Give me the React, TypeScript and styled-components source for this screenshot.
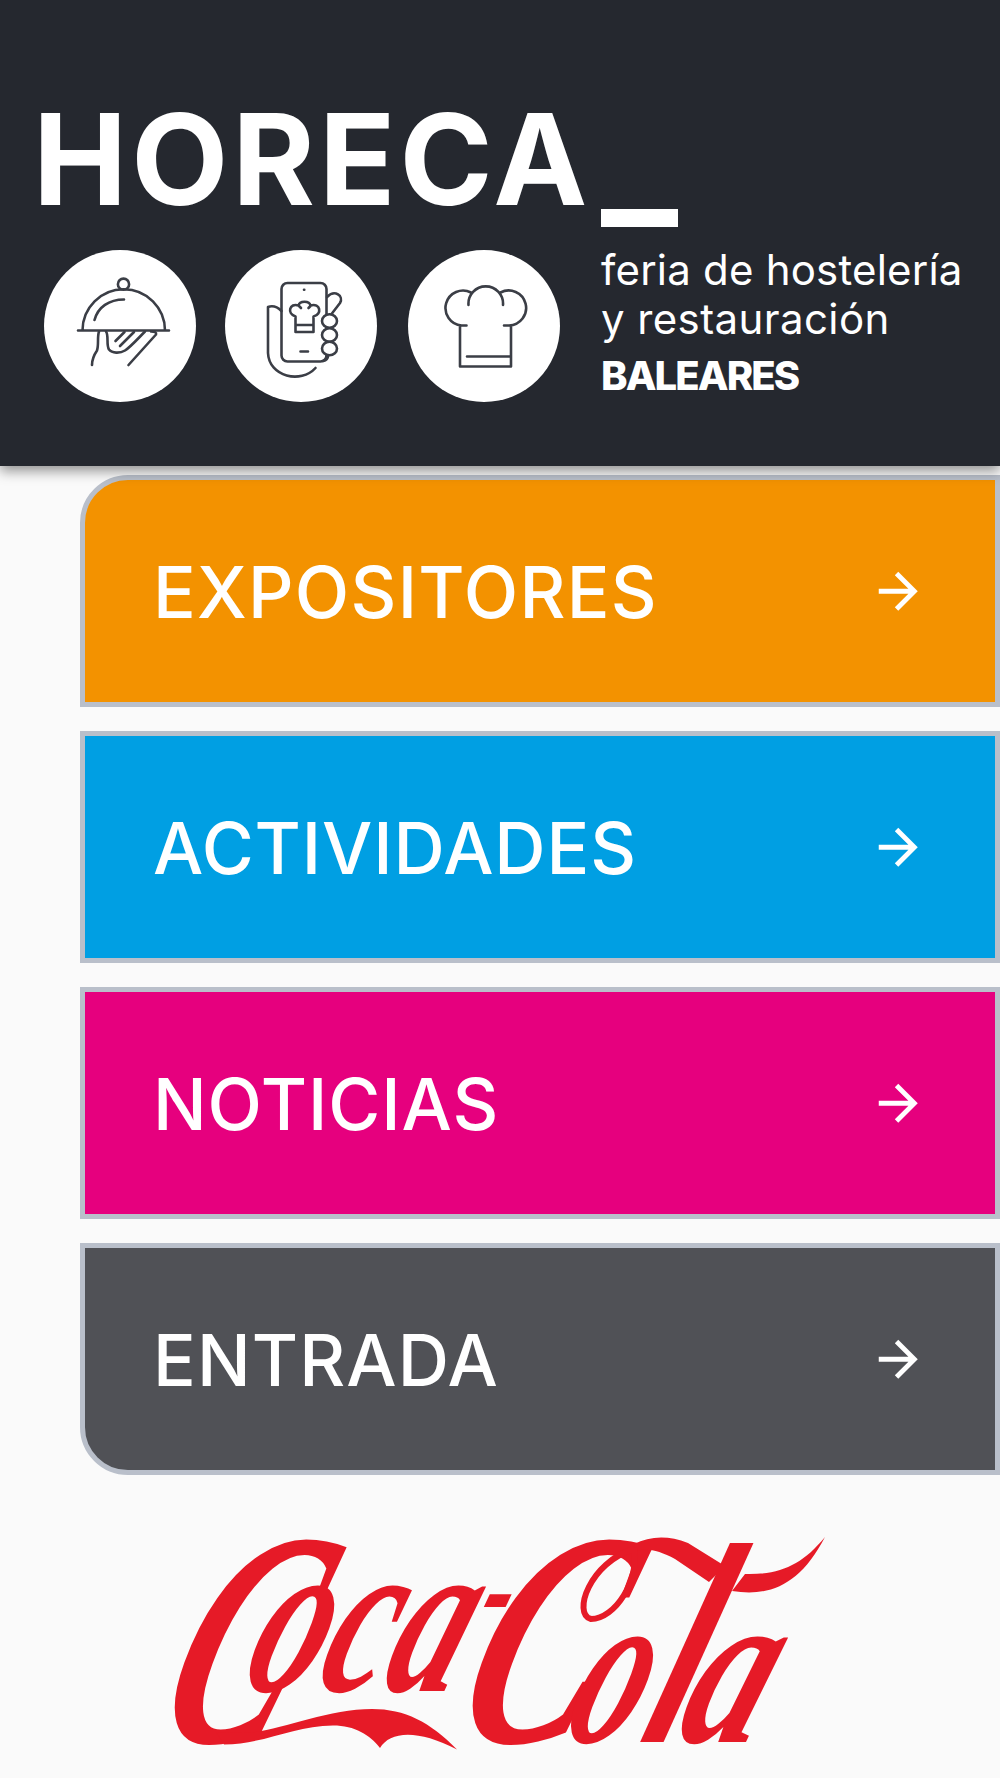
import React from "react";
import styled, { createGlobalStyle } from "styled-components";

const GlobalStyle = createGlobalStyle`
  *, *::before, *::after { box-sizing: border-box; }
  body { margin: 0; background: #fafafa; font-family: Inter, "Liberation Sans", sans-serif; }
`;

const Page = styled.div`
  height: 1778px;
  display: flex;
  flex-direction: column;
  background: #fafafa;
`;

const Header = styled.header`
  position: relative;
  z-index: 1;
  flex: none;
  height: 466px;
  padding: 113px 30px 0 35px;
  background: #25282f;
  color: #fff;
  box-shadow: 0 5px 12px rgba(0, 0, 0, 0.42);
`;

const Brand = styled.div`
  display: flex;
  height: 137px;
`;

const BrandName = styled.h1`
  margin: 0 0 0 -2px;
  width: 568px;
  height: 92px;
  font: 700 126px/92px Inter, sans-serif;
  letter-spacing: 4px;
  white-space: nowrap;
`;

const Underscore = styled.span`
  width: 77px;
  height: 18px;
  margin-top: 96px;
  background: #fff;
`;

const BrandDetails = styled.div`
  display: flex;
  padding-left: 9px;
`;

const Badges = styled.div`
  display: grid;
  grid-template-columns: 180.5px 183.5px 193px;
`;

const Badge = styled.svg`
  width: 152px;
  height: 152px;
  border-radius: 50%;
  background: #fff;
  fill: none;
  stroke: #3b3e46;
  stroke-width: 2.6;
  stroke-linecap: round;
  stroke-linejoin: round;
`;

const Tagline = styled.div`
  display: flex;
  flex-direction: column;
`;

const TagText = styled.span<{ $spacing: number }>`
  height: 49px;
  font-size: 42px;
  line-height: 40px;
  letter-spacing: ${(p) => p.$spacing}px;
  white-space: nowrap;
`;

const TagStrong = styled.strong`
  padding-top: 8px;
  font-size: 40px;
  font-weight: 800;
  line-height: 40px;
  letter-spacing: -1.9px;
`;

const Menu = styled.nav`
  display: flex;
  flex-direction: column;
  gap: 24px;
  padding: 9px 0 0 80px;
`;

const MenuItem = styled.a<{ $color: string; $radius?: string }>`
  display: flex;
  align-items: center;
  justify-content: space-between;
  height: 232px;
  padding: 0 68px;
  border: 5px solid #b9bfca;
  border-radius: ${(p) => p.$radius ?? "0"};
  background: ${(p) => p.$color};
  color: #fff;
`;

const Label = styled.span<{ $spacing: number }>`
  padding-top: 2px;
  font-size: 71px;
  font-weight: 500;
  line-height: 80px;
  letter-spacing: ${(p) => p.$spacing}px;
`;

const Arrow = styled.svg`
  width: 58.5px;
  height: 58.5px;
  fill: #fff;
`;

const Sponsor = styled.footer`
  display: flex;
  padding: 55px 0 0 165px;
`;

const SponsorLogo = styled.svg`
  flex: none;
  width: 670px;
  height: 248px;
  fill: #e61a27;
  font-family: "Liberation Serif", serif;
  font-weight: 700;
  font-style: italic;
`;

const items = [
  { label: "EXPOSITORES", color: "#f39200", radius: "48px 0 0 0", spacing: 1.25 },
  { label: "ACTIVIDADES", color: "#009fe3", spacing: 0.9 },
  { label: "NOTICIAS", color: "#e6007e", spacing: 0.9 },
  { label: "ENTRADA", color: "#505156", radius: "0 0 0 48px", spacing: 1.1 },
];

const ClocheBadge = () => (
  <Badge viewBox="0 0 152 152">
    <circle cx="79.500" cy="34.200" r="5.600" />
    <path d="M38.500 80.500A41 41 0 0 1 121 80.500M34 80.500h91M50.500 70C54 57 65 49.500 80 49.500" />
    <path d="M55 81.500c-2 6 0 13-2 19-4 6-5 9-5 14.500M62 81.500c3 4 0 13 3 18 3 4 11 4 16 1 5-3 13-12 20-19M71.500 91l9-9M76 96l14-14M107 81.500q6 0 5 3L84.500 115" />
  </Badge>
);

const PhoneBadge = () => (
  <Badge viewBox="0 0 152 152">
    <rect x="56.500" y="33" width="45" height="78.500" rx="6" />
    <path d="M79 39.700h.3M75.500 101.500h7.500" />
    <path d="M56.500 61c-4-4-8-6-13.500-4v46c1 24 33 31 47.500 15" />
    <path d="M102 47c8-8 17-1 13 6l-10 13M98 111q5-1 5-5" />
    <ellipse cx="104.500" cy="71" rx="7.500" ry="6.800" fill="#fff" />
    <ellipse cx="104.500" cy="85" rx="7.500" ry="6.800" fill="#fff" />
    <ellipse cx="104.500" cy="98.500" rx="7.500" ry="6.800" fill="#fff" />
    <path d="M70.500 82V66.500c-9-3-6-14 3-11 1-5 11-5 12 0 10-3 12 9 3 11V82zM70.500 75h18M74 56l2 2M85.500 56l-2 2" />
  </Badge>
);

const ChefBadge = () => (
  <Badge viewBox="0 0 152 152">
    <path d="M58.500 75.500h-5A17.500 17.500 0 1 1 63 42.500M52 75.500v41h51v-41M96 75.500h5A17.500 17.500 0 1 0 92.500 42.500M60.500 55a17.300 17.300 0 1 1 34.500 0M59 106.500h43" />
  </Badge>
);

const CocaCola = () => (
  <SponsorLogo viewBox="165 1530 670 248">
    <g transform="translate(0 1742) skewX(-20)">
      <text>
        <tspan x="149" y="0" fontSize="306" textLength="125" lengthAdjust="spacingAndGlyphs">C</tspan>
        <tspan x="219" y="-51" fontSize="224" textLength="214" lengthAdjust="spacingAndGlyphs">oca</tspan>
        <tspan x="433" y="-106" fontSize="150" textLength="28" lengthAdjust="spacingAndGlyphs">-</tspan>
        <tspan x="446" y="0" fontSize="306" textLength="134" lengthAdjust="spacingAndGlyphs">C</tspan>
        <tspan x="559" y="0" fontSize="224" textLength="71" lengthAdjust="spacingAndGlyphs">o</tspan>
        <tspan x="636" y="0" fontSize="268" fontFamily="Lato" textLength="46" lengthAdjust="spacingAndGlyphs">l</tspan>
        <tspan x="672" y="0" fontSize="224" textLength="82" lengthAdjust="spacingAndGlyphs">a</tspan>
      </text>
    </g>
    <path d="M224 1744.500C265 1744 295 1725.500 333 1725.500C355 1725.500 370 1735 380 1748C390 1731 418 1729 457 1749.500C430 1722 405 1709 372 1709C325 1709 275 1733 243 1733L216 1732Z" />
    <path d="M634 1544C650 1536 668 1535 688 1543L725 1566L709 1582L675 1559C660 1551 648 1548 636 1551Z" />
    <path d="M745 1574C780 1575 802 1565 825 1537C800 1585 770 1597 732 1591Z" />
    <path d="M634 1548C640 1580 615 1619 591 1619C572 1614 590 1562 634 1549" fill="none" stroke="#e61a27" strokeWidth="6" />
  </SponsorLogo>
);

export default function App() {
  return (
    <>
      <GlobalStyle />
      <Page>
        <Header>
          <Brand>
            <BrandName>HORECA</BrandName>
            <Underscore />
          </Brand>
          <BrandDetails>
            <Badges>
              <ClocheBadge />
              <PhoneBadge />
              <ChefBadge />
            </Badges>
            <Tagline>
              <TagText $spacing={0.2}>feria de hostelería</TagText>
              <TagText $spacing={0.4}>y restauración</TagText>
              <TagStrong>BALEARES</TagStrong>
            </Tagline>
          </BrandDetails>
        </Header>
        <Menu>
          {items.map((item) => (
            <MenuItem key={item.label} $color={item.color} $radius={item.radius}>
              <Label $spacing={item.spacing}>{item.label}</Label>
              <Arrow viewBox="0 0 24 24">
                <path d="M12 4l-1.410 1.410L16.170 11H4v2h12.170l-5.580 5.590L12 20l8-8z" />
              </Arrow>
            </MenuItem>
          ))}
        </Menu>
        <Sponsor>
          <CocaCola />
        </Sponsor>
      </Page>
    </>
  );
}
